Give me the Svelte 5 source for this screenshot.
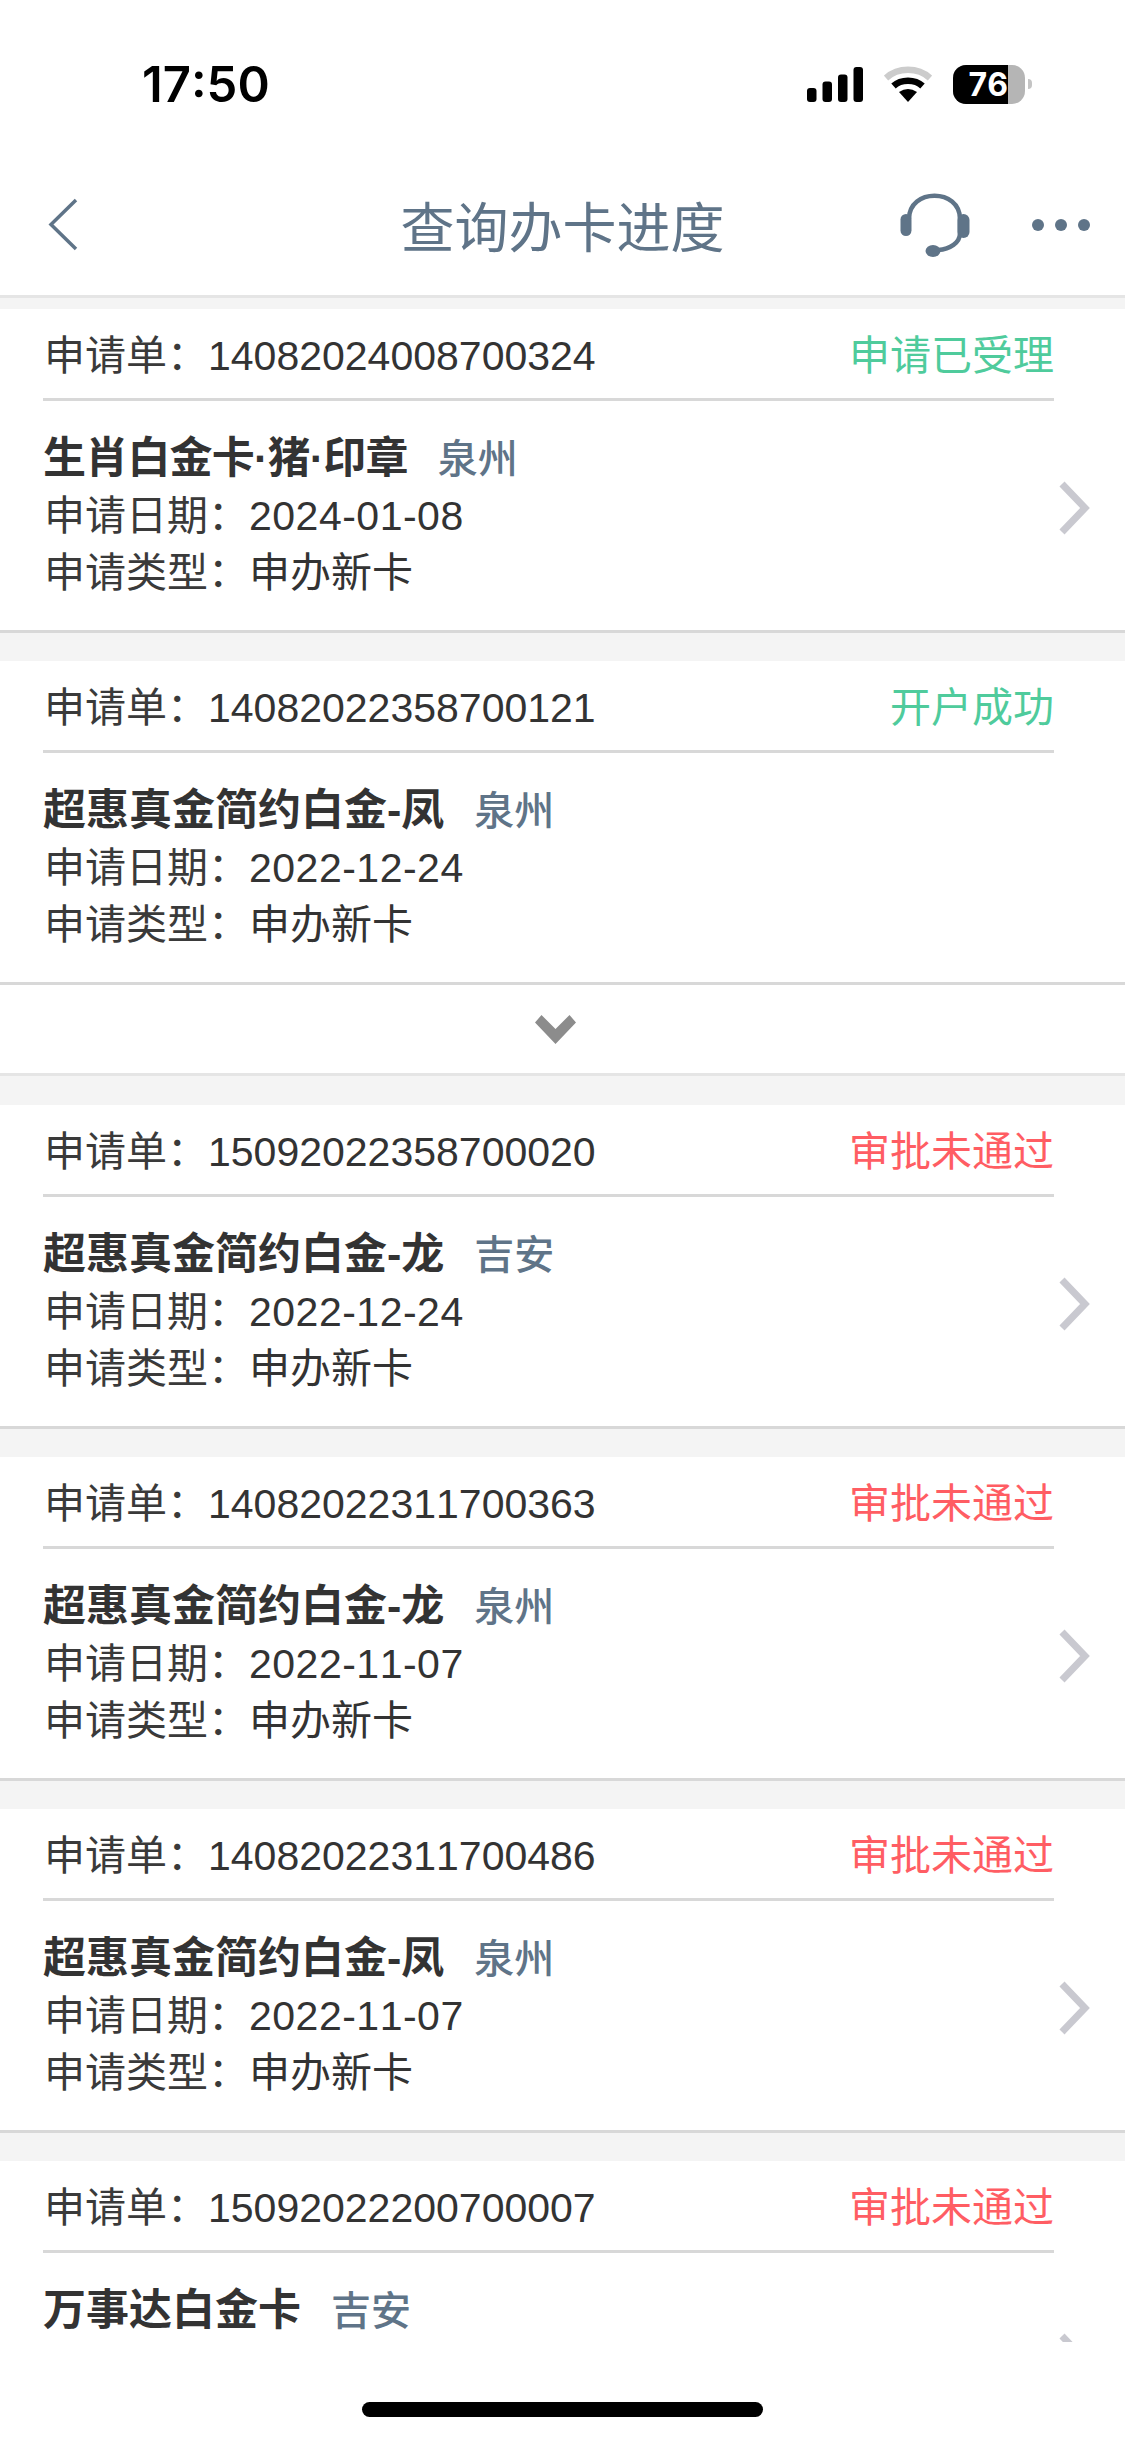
<script>
	const cards = [
		{ no: '14082024008700324', status: '申请已受理', ok: true, name: '生肖白金卡·猪·印章', tight: true, city: '泉州', date: '2024-01-08', kind: '申办新卡', arrow: true },
		{ no: '14082022358700121', status: '开户成功', ok: true, name: '超惠真金简约白金-凤', city: '泉州', date: '2022-12-24', kind: '申办新卡', more: true },
		{ no: '15092022358700020', status: '审批未通过', ok: false, name: '超惠真金简约白金-龙', city: '吉安', date: '2022-12-24', kind: '申办新卡', arrow: true },
		{ no: '14082022311700363', status: '审批未通过', ok: false, name: '超惠真金简约白金-龙', city: '泉州', date: '2022-11-07', kind: '申办新卡', arrow: true },
		{ no: '14082022311700486', status: '审批未通过', ok: false, name: '超惠真金简约白金-凤', city: '泉州', date: '2022-11-07', kind: '申办新卡', arrow: true },
		// only the top of this one is on screen
		{ no: '15092022200700007', status: '审批未通过', ok: false, name: '万事达白金卡', city: '吉安', arrow: true }
	];
</script>

<div class="page">
	<div class="status-bar">
		<span class="time">17:50</span>
		<div class="status-icons">
			<svg class="signal" width="56" height="35" viewBox="0 0 56 35">
				<rect x="0" y="21" width="9.5" height="14" rx="3" />
				<rect x="15.5" y="14.5" width="9.5" height="20.5" rx="3" />
				<rect x="31" y="7.5" width="9.5" height="27.5" rx="3" />
				<rect x="46.5" y="0" width="9.5" height="35" rx="3" />
			</svg>
			<svg class="wifi" width="48" height="36" viewBox="0 0 48 36">
				<path d="M2 12 C14 1 34 1 46 12" fill="none" stroke="#ccc" stroke-width="6.5" />
				<path d="M9.5 20 C17 13 31 13 38.5 20" fill="none" stroke="#000" stroke-width="6.5" />
				<path d="M15 26 Q24 20 33 26 L24 36 Z" fill="#000" />
			</svg>
			<div class="battery">
				<span class="battery-level">76</span>
				<span class="battery-rest"></span>
			</div>
			<span class="battery-nub"></span>
		</div>
	</div>

	<header class="nav">
		<div class="nav-left">
			<svg width="30" height="53" viewBox="0 0 30 53">
				<path d="M28 2 L3 26.5 L28 51" fill="none" stroke="#5f7488" stroke-width="3.5" />
			</svg>
		</div>
		<h1>查询办卡进度</h1>
		<div class="nav-right">
			<svg class="headset" width="70" height="67" viewBox="0 0 70 67">
				<path d="M9 28 C9 -3 60 -3 60 28 L60 42 C60 52 50 58 38 59" fill="none" stroke="#5f7488" stroke-width="4.5" />
				<rect x="0.5" y="23" width="11" height="22" rx="5.5" fill="#5f7488" />
				<rect x="57.5" y="23" width="12" height="24" rx="6" fill="#5f7488" />
				<ellipse cx="33" cy="60" rx="7.5" ry="6" fill="#5f7488" />
			</svg>
			<div class="dots"><i></i><i></i><i></i></div>
		</div>
	</header>

	<main class="list">
		{#each cards as card}
			<section class="card">
				<div class="card-head">
					<span><span class="label">申请单：</span>{card.no}</span>
					<span class={card.ok ? 'state ok' : 'state bad'}>{card.status}</span>
				</div>
				<div class="card-body">
					<div class="info">
						<div class="title"><b class:tight={card.tight}>{card.name}</b><span class="city">{card.city}</span></div>
						{#if card.date}
							<div class="line"><span class="label">申请日期：</span><span class="date">{card.date}</span></div>
							<div class="line"><span class="label">申请类型：</span>{card.kind}</div>
						{/if}
					</div>
					{#if card.arrow}
						<svg class="arrow" width="32" height="54" viewBox="0 0 32 54">
							<path d="M4 3 L27 27 L4 51" fill="none" stroke="#c9c9d0" stroke-width="7" />
						</svg>
					{/if}
				</div>
			</section>
			{#if card.more}
				<div class="more">
					<svg width="41" height="29" viewBox="0 0 41 29">
						<path d="M0 7.5 L6.5 0 L20.5 14 L34.5 0 L41 7.5 L20.500 29 Z" fill="#8c8c8c" />
					</svg>
				</div>
			{/if}
		{/each}
	</main>

	<div class="home-area"><span class="home"></span></div>
</div>

<style>
	:global(body) {
		background: #fff;
	}

	.page {
		width: 1125px;
		height: 2439px;
		overflow: hidden;
		background: #fff;
		font-family: 'Liberation Sans', 'Noto Sans CJK SC', sans-serif;
		font-kerning: none;
		color: #333;
	}

	.status-bar {
		height: 64px;
		padding: 52px 93px 0 142px;
		display: flex;
		justify-content: space-between;
		align-items: center;
	}

	.time {
		font-family: Inter, sans-serif;
		font-size: 49px;
		font-weight: 600;
		color: #000;
	}

	.status-icons {
		display: flex;
		align-items: center;
	}

	.signal,
	.wifi {
		margin-right: 21px;
	}

	.battery {
		width: 72px;
		height: 39px;
		border-radius: 13px;
		overflow: hidden;
		display: flex;
		background: #b5b5b5;
	}

	.battery-level {
		width: 55px;
		background: #000;
		color: #fff;
		font-family: Inter, sans-serif;
		font-size: 32px;
		font-weight: 700;
		line-height: 39px;
		text-align: right;
	}

	.battery-rest {
		flex: 1;
	}

	.battery-nub {
		width: 4px;
		height: 10px;
		margin-left: 3px;
		background: #c4c4c4;
		border-radius: 0 5px 5px 0;
	}

	.nav {
		height: 182px;
		box-sizing: border-box;
		border-bottom: 3px solid #e5e5e5;
		display: grid;
		grid-template-columns: 1fr auto 1fr;
		align-items: center;
		padding: 38px 35px 0;
		color: #5f7488;
	}

	.nav-left,
	.nav-right {
		display: flex;
		align-items: center;
	}

	.nav-left {
		padding-left: 13px;
	}

	.nav-right {
		justify-content: flex-end;
	}

	.nav h1 {
		margin: 0;
		font-size: 54px;
		font-weight: 400;
	}

	.headset {
		margin-right: 62px;
	}

	.dots {
		display: flex;
		gap: 11px;
	}

	.dots i {
		width: 12px;
		height: 12px;
		border-radius: 50%;
		background: #5f7488;
	}

	.list {
		height: 2044px;
		overflow: hidden;
		background: #f4f4f4;
		padding-top: 11px;
		box-sizing: border-box;
	}

	.card {
		background: #fff;
		height: 324px;
		box-sizing: border-box;
		border-bottom: 3px solid #d8d8d8;
		margin-bottom: 28px;
	}

	.card-head {
		height: 92px;
		box-sizing: border-box;
		margin: 0 71px 0 43px;
		padding: 0 0 3px 1px;
		border-bottom: 3px solid #d8d8d8;
		display: flex;
		justify-content: space-between;
		align-items: center;
		font-size: 41px;
	}

	.label {
		color: #3a3a3a;
	}

	.state.ok {
		color: #4fcb9c;
	}

	.state.bad {
		color: #ff5d63;
	}

	.card-body {
		display: flex;
		justify-content: space-between;
		align-items: flex-start;
		padding: 29px 35px 0 44px;
	}

	.title {
		line-height: 57px;
		font-size: 43px;
		margin-left: -1px;
	}

	.title b {
		font-weight: 700;
	}

	.title b.tight {
		letter-spacing: -0.8px;
	}

	.city {
		margin-left: 30px;
		font-size: 40px;
		color: #5f7488;
		font-weight: 500;
	}

	.line {
		font-size: 41px;
		line-height: 57px;
	}

	.date {
		letter-spacing: 0.5px;
	}

	.arrow {
		margin-top: 51px;
	}

	.more {
		height: 91px;
		box-sizing: border-box;
		margin-top: -28px;
		margin-bottom: 29px;
		background: #fff;
		border-bottom: 3px solid #e5e5e5;
		display: flex;
		justify-content: center;
		align-items: center;
		padding-right: 15px;
	}

	.home-area {
		height: 97px;
		display: flex;
		justify-content: center;
		padding-top: 60px;
		background: #fff;
	}

	.home {
		width: 401px;
		height: 15px;
		border-radius: 8px;
		background: #000;
	}
</style>
